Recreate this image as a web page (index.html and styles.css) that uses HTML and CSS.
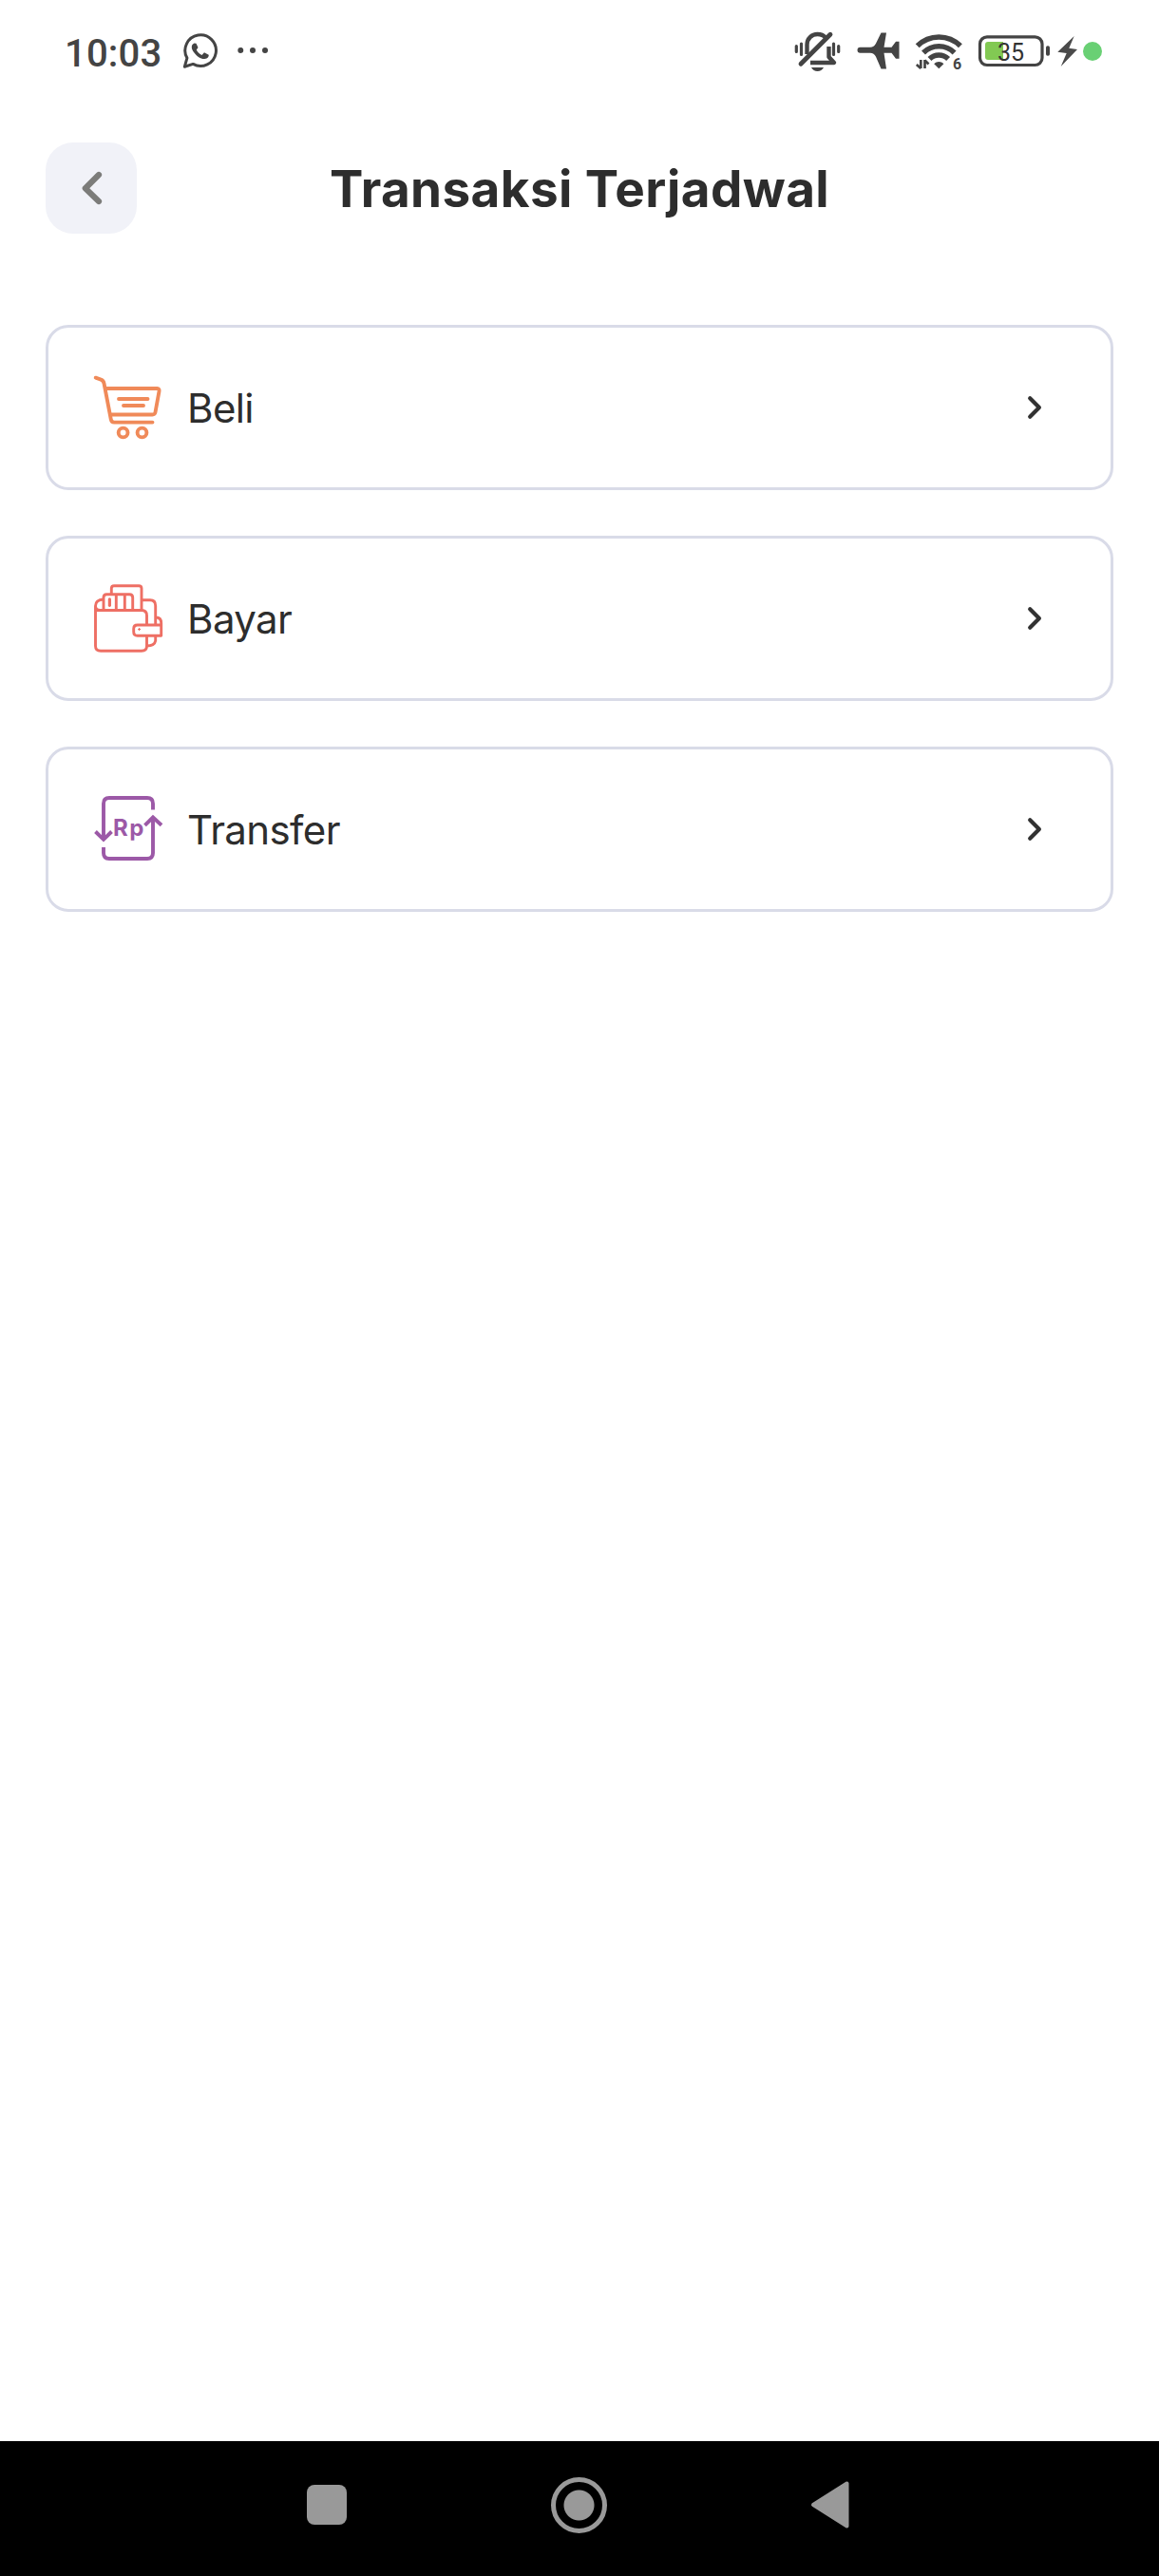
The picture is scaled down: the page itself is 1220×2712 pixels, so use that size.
FILE: index.html
```html
<!DOCTYPE html>
<html lang="id">
<head>
<meta charset="utf-8">
<title>Transaksi Terjadwal</title>
<link rel="stylesheet" href="styles.css">
</head>
<body>
<div class="screen">
  <div class="status">
    <span class="time">10:03</span>
    <svg class="whatsapp" width="38" height="44" viewBox="192 32 38 44">
      <path d="M194.300 70.300l2.600-9.200a16.300 16.300 0 1 1 6.300 6.300z" fill="none" stroke="#444" stroke-width="3" stroke-linejoin="round"/>
      <path d="M204.500 45.500c-3.500 1.500-3.500 5.500-.5 9.500 3.500 4.800 8 7.500 11.500 7 3-.5 4.700-2.500 4.200-4.300l-4.700-2.400-2.500 2.600c-2.500-1-4.500-3-5.700-5.400l1.700-2.500-2-4.300z" fill="#444"/>
    </svg>
    <svg class="dots" width="34" height="44" viewBox="250 32 34 44" fill="#444"><circle cx="253.300" cy="53" r="3"/><circle cx="266" cy="53" r="3"/><circle cx="279" cy="53" r="3"/></svg>
    <div class="indicators">
      <svg class="bell" width="50" height="44" viewBox="836 32 50 44" fill="none" stroke="#444" stroke-width="3.200" stroke-linecap="round">
        <path d="M838.300 48.500v6M843.500 46v11.500M877.500 46v11.500M882.700 48.500v6"/>
        <path d="M849.500 57V47c0-6.500 5-11 11-11 3.500 0 6.500 1.200 8.500 3.500" stroke-width="4.400" stroke-linecap="butt"/>
        <path d="M872.500 49v11l5.500 6H853" stroke-width="4.400" stroke-linecap="butt" stroke-linejoin="round"/>
        <path d="M843 67.300L874 36.200" stroke-width="4.800"/>
        <path d="M854 71h13c-1.500 2.600-3.500 4-6.500 4s-5-1.400-6.500-4z" fill="#444" stroke="none"/>
      </svg>
      <svg class="plane" width="47" height="44" viewBox="901 32 47 44"><path d="M905.500 49.700h10.500q4 0 6-4L927.500 34.500h5.500l-2.500 15.200h8l4.500-6h3.500v18h-3.500l-4.500-6h-8L933 72.500h-5.500L922 59.700q-2-4-6-4h-10.500a3 3 0 0 1 0-6z" fill="#444"/></svg>
      <svg class="wifi" width="52" height="44" viewBox="962 32 52 44">
        <path d="M965.700 48.300a32 32 0 0 1 45.200 0M972 55.500a23 23 0 0 1 32.600 0M978.500 62a14 14 0 0 1 19.600 0" fill="none" stroke="#444" stroke-width="5.600"/>
        <path d="M983.200 67.200c3-3 7.200-3 10.200 0l-5.100 5z" fill="#444"/>
        <path d="M969.300 63v9M969.300 72l-4.500-4M973.500 72v-9M973.500 63.500l4 4" fill="none" stroke="#444" stroke-width="2.700"/>
        <text class="generation" x="1003" y="72.500">6</text>
      </svg>
      <svg class="battery" width="77" height="44" viewBox="1029 32 77 44">
        <rect x="1031.500" y="38.800" width="65.500" height="29.700" rx="7.500" fill="none" stroke="#444" stroke-width="3.200"/>
        <path d="M1040 44h16v19h-16a3 3 0 0 1-3-3V47a3 3 0 0 1 3-3z" fill="#82c953"/>
        <rect x="1101" y="48.300" width="4" height="10.500" rx="1.800" fill="#444"/>
        <text class="charge" x="1050" y="63.500" textLength="28">35</text>
      </svg>
      <svg class="bolt" width="23" height="44" viewBox="1112 32 23 44"><path d="M1130.700 38L1113.300 54.700l9.400 1.300-6 14L1134 52l-8.700-1.300z" fill="#4a4a4a"/></svg>
      <span class="active-dot"></span>
    </div>
  </div>

  <header class="header">
    <button class="back" aria-label="Kembali"><svg width="96" height="96" viewBox="48 150 96 96"><path d="M104 184L89.800 198.200 104 212" fill="none" stroke="#7c7c7a" stroke-width="6.200" stroke-linecap="round" stroke-linejoin="round"/></svg></button>
    <h1 class="title">Transaksi Terjadwal</h1>
  </header>

  <main class="list">
    <a class="card">
      <svg class="icon" width="76" height="76" viewBox="98 391 76 76" fill="none" stroke="#f08a59" stroke-width="3.900" stroke-linecap="round" stroke-linejoin="round">
        <path d="M100.700 397.700l5.500 1.900q2.700 1 3.300 4l7.300 38q.6 3 3.400 3h40.300M111.500 409h54q2.500 0 2 3l-4 22q-.5 2.500-3 2.500H116.500"/>
        <path d="M125 420h30.500M130 427h21"/><circle cx="129.600" cy="455.500" r="4.900"/><circle cx="149.500" cy="455.500" r="4.900"/>
      </svg>
      <span class="label">Beli</span>
      <svg class="chevron" width="18" height="28" viewBox="1080 415 18 28"><path d="M1084.200 419.200l9.700 9.800-9.700 9.800" fill="none" stroke="#323232" stroke-width="4.200" stroke-linecap="round" stroke-linejoin="round"/></svg>
    </a>
    <a class="card">
      <svg class="icon" width="76" height="76" viewBox="98 613 76 76" fill="none" stroke="#ee6f64" stroke-width="2.900" stroke-linejoin="round">
        <path d="M100.500 642.500H149q5.500 0 5.500 5.500v10M154.500 670v10q0 5.300-5.500 5.300h-43q-5.500 0-5.500-5.300v-42q0-6.500 8.500-7M100.500 638q0 4.500 5 4.500"/>
        <path d="M109 642v-13q0-3.300 3.300-3.300h24q3.400 0 3.400 3.300v13M122.300 626v16M131.300 626v16M117.300 625v-5.500q0-2.800 2.800-2.800h26q2.900 0 2.900 2.800V642"/>
        <path d="M149 631.700h9q5.700 0 5.700 6V658M163.700 670v4.500q-1 5.500-9.200 5.500M164 650q5.700 0 5.700 6v13.300h-25q-4 0-4-4v-3.300q0-4 4-4h25"/>
        <path d="M115.400 630.800v6.500" stroke-width="3.200" stroke-linecap="round"/><path d="M146.600 661v3M145.100 662.500h3" stroke-width="1.100"/>
      </svg>
      <span class="label">Bayar</span>
      <svg class="chevron" width="18" height="28" viewBox="1080 415 18 28"><path d="M1084.200 419.200l9.700 9.800-9.700 9.800" fill="none" stroke="#323232" stroke-width="4.200" stroke-linecap="round" stroke-linejoin="round"/></svg>
    </a>
    <a class="card">
      <svg class="icon" width="76" height="76" viewBox="98 835 76 76" fill="none" stroke="#9c59a7" stroke-width="3.900">
        <path d="M109 883.500V846q0-6 6-6h40q6 0 6 6v6.500M109 892v6q0 6 6 6h40q6 0 6-6V860.500"/>
        <path d="M100.500 875.500l8.500 8.300 8.500-8.300M152.500 868.800l8.500-8.300 9 8.300"/>
        <text class="currency" x="119" y="879.700" textLength="32.500">Rp</text>
      </svg>
      <span class="label">Transfer</span>
      <svg class="chevron" width="18" height="28" viewBox="1080 415 18 28"><path d="M1084.200 419.200l9.700 9.800-9.700 9.800" fill="none" stroke="#323232" stroke-width="4.200" stroke-linecap="round" stroke-linejoin="round"/></svg>
    </a>
  </main>

  <nav class="navbar">
    <span class="recents"></span>
    <span class="home"></span>
    <svg class="nav-back" width="42" height="52" viewBox="853 2611 42 52"><path d="M891.500 2614.500v45L856 2637z" fill="#999" stroke="#999" stroke-width="4" stroke-linejoin="round"/></svg>
  </nav>
</div>
</body>
</html>
```
FILE: styles.css
```css
body { margin: 0; background: #fff; }
.screen {
  width: 1220px;
  height: 2712px;
  display: flex;
  flex-direction: column;
  background: #fff;
  font-family: Inter, "Liberation Sans", sans-serif;
  color: #2d2d2d;
}
svg { display: block; flex: none; }

.status {
  box-sizing: border-box;
  height: 150px;
  padding: 32px 60px 0 68px;
  display: flex;
  align-items: flex-start;
}
.time {
  width: 124px;
  font: 500 40px/50px Roboto, sans-serif;
  letter-spacing: 0.2px;
  color: #444;
}
.dots { margin-left: 20px; }
.indicators { margin-left: auto; display: flex; }
.plane { margin-left: 15px; }
.wifi { margin-left: 14px; }
.battery { margin-left: 15px; }
.bolt { margin-left: 6px; }
.active-dot {
  width: 20px;
  height: 20px;
  margin: 12px 0 0 5px;
  border-radius: 50%;
  background: #69d074;
}
.generation { font: 700 16px Roboto, sans-serif; fill: #444; }
.charge { font: 400 25px Roboto, sans-serif; fill: #333; }

.header {
  height: 96px;
  padding: 0 48px;
  display: grid;
  grid-template-columns: 96px 1fr 96px;
  align-items: center;
}
.back {
  width: 96px;
  height: 96px;
  padding: 0;
  border: 0;
  border-radius: 29px;
  background: #f1f2f8;
}
.title {
  margin: 0;
  padding-top: 2px;
  text-align: center;
  font-size: 53px;
  line-height: 64px;
  font-weight: 700;
  letter-spacing: 0.4px;
  white-space: nowrap;
}

.list {
  flex: 1;
  padding: 96px 48px 0;
  display: flex;
  flex-direction: column;
  gap: 48px;
}
.card {
  box-sizing: border-box;
  height: 174px;
  padding: 0 71px 0 47px;
  display: flex;
  align-items: center;
  border: 3px solid #d9dbe8;
  border-radius: 24px;
}
.label {
  flex: 1;
  margin-left: 23px;
  padding-top: 2px;
  font-size: 42px;
  line-height: 50px;
  font-weight: 400;
  letter-spacing: -0.6px;
}
.currency { font: 700 24px Inter, sans-serif; fill: #9c59a7; stroke: none; }

.navbar {
  height: 142px;
  padding: 0 325px 0 323px;
  box-sizing: border-box;
  display: flex;
  align-items: center;
  justify-content: space-between;
  background: #000;
}
.recents { width: 42px; height: 42px; border-radius: 8px; background: #999; }
.home {
  box-sizing: border-box;
  width: 59px;
  height: 59px;
  border: 5px solid #999;
  border-radius: 50%;
  background: radial-gradient(circle, #999 15.500px, #000 16.500px);
}
.recents, .home, .nav-back { margin-bottom: 8px; }
```
